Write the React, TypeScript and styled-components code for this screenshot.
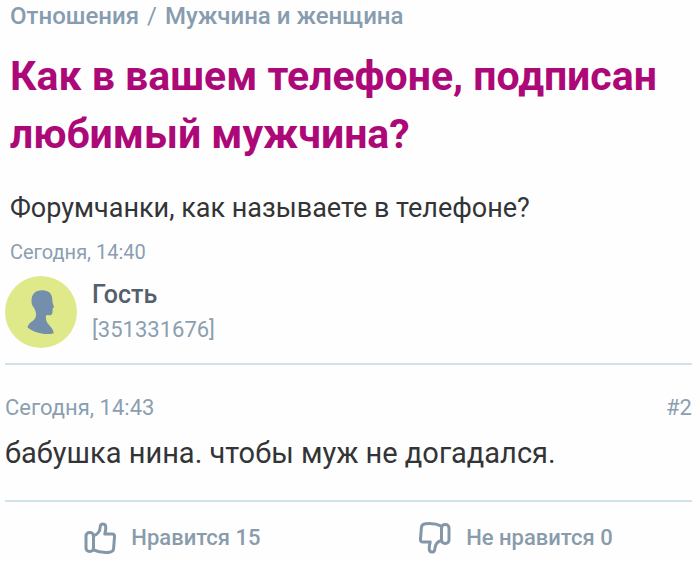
import React from 'react';
import styled, { createGlobalStyle } from 'styled-components';

const Global = createGlobalStyle`
  * { box-sizing: border-box; }
  body { margin: 0; background: #fefefe; color: #333436; font-family: Roboto, sans-serif; }
`;
const Page = styled.main`
  padding: 0 8px 0 5px;
`;
const Topic = styled.article`
  border-bottom: 2px solid #d3e1e9;
  padding-bottom: 15px;
`;
const TopicBody = styled.div`
  display: flex;
  flex-direction: column;
  padding: 4px 5px 12px;
`;
const Crumbs = styled.nav`
  display: flex;
  gap: 8px;
  font-size: 24px;
  line-height: 24px;
  font-weight: 500;
  color: #879cae;
`;
const Crumb = styled.a`
  color: inherit;
  text-decoration: none;
`;
const Slash = styled.span`
  font-weight: 400;
`;
const Title = styled.h1`
  margin: 19px 0 27px;
  font-size: 41px;
  line-height: 58px;
  font-weight: 700;
  color: #ad0878;
`;
const Text = styled.p<{ $size: number }>`
  margin: 0;
  font-size: ${p => p.$size}px;
  line-height: 36px;
`;
const Stamp = styled.time<{ $size: number }>`
  font-size: ${p => p.$size}px;
  line-height: 24px;
  color: #8b9fb1;
`;
const TopicStamp = styled(Stamp)`
  margin-top: 14px;
`;
const Author = styled.div`
  display: flex;
  gap: 15px;
`;
const Avatar = styled.svg`
  width: 72px;
  height: 72px;
  flex: none;
`;
const Name = styled.div`
  font-size: 25px;
  line-height: 38px;
  font-weight: 500;
  color: #53606b;
`;
const Id = styled.div`
  font-size: 22px;
  line-height: 32px;
  color: #8b9fb1;
`;
const Reply = styled.article`
  display: flex;
  flex-direction: column;
  gap: 15px;
  padding: 31px 0 29px;
`;
const Meta = styled.header`
  display: flex;
  justify-content: space-between;
`;
const Votes = styled.footer`
  display: flex;
  justify-content: space-around;
  padding: 20px 0 7px;
  border-top: 2px solid #d3e1e9;
`;
const Vote = styled.button`
  display: flex;
  gap: 15px;
  align-items: center;
  padding: 0;
  border: 0;
  background: none;
  font: 500 22px/24px Roboto, sans-serif;
  color: #8a9bab;
  cursor: pointer;
`;
const Icon = styled.svg`
  width: 32px;
  height: 32px;
  flex: none;
  fill: none;
  stroke: #8497a8;
  stroke-width: 3;
  stroke-linejoin: round;
  stroke-linecap: round;
`;

function Thumb({ down = false }: { down?: boolean }) {
  return (
    <Icon viewBox="0 0 32 32" aria-hidden="true">
      <g transform={down ? 'rotate(180 16 16)' : undefined}>
        <rect x="2" y="10.500" width="7.500" height="19" rx="3.500" />
        <path d="M9.500 13.500C13.500 12.500 16 9.500 16.200 5C16.200 .8 21.800 .8 21.800 5.500C21.800 8 21.500 9.500 20.800 12H28C30 12 30.700 13 30.500 15L29.600 26.500C29.400 29 28 30 25.500 30.200C19.500 30.800 14 30 9.500 27.800" />
      </g>
    </Icon>
  );
}

export default function App() {
  return (
    <>
      <Global />
      <Page>
        <Topic>
          <TopicBody>
            <Crumbs>
              <Crumb href="#relations">Отношения</Crumb>
              <Slash>/</Slash>
              <Crumb href="#man-woman">Мужчина и женщина</Crumb>
            </Crumbs>
            <Title>Как в вашем телефоне, подписан любимый мужчина?</Title>
            <Text $size={27}>Форумчанки, как называете в телефоне?</Text>
            <TopicStamp $size={20}>Сегодня, 14:40</TopicStamp>
          </TopicBody>
          <Author>
            <Avatar viewBox="0 0 72 72" aria-hidden="true">
              <circle cx="36" cy="36" r="36" fill="#dfe98a" />
              <path
                d="M26.500 25C26.500 18 30.500 14.300 37 14.300C44 14.300 47.300 18 47.300 24C47.300 27.500 48.800 29.500 49 31.200L47.500 32.500C47.800 36.500 47.500 39 45 39.200L41 39.200C40.500 43.500 41.500 46.500 44.500 49.500C47 52 48.500 54.500 48.700 57.200C40 59.500 30 57 22.500 51.500C23 48.500 25 47 28 44.800C32 41.500 32 37 29 32C27.300 29.500 26.500 28 26.500 25Z"
                fill="#738fab"
              />
            </Avatar>
            <div>
              <Name>Гость</Name>
              <Id>[351331676]</Id>
            </div>
          </Author>
        </Topic>
        <Reply>
          <Meta>
            <Stamp $size={22}>Сегодня, 14:43</Stamp>
            <Stamp as="span" $size={22}>#2</Stamp>
          </Meta>
          <Text $size={29}>бабушка нина. чтобы муж не догадался.</Text>
        </Reply>
        <Votes>
          <Vote type="button"><Thumb />Нравится 15</Vote>
          <Vote type="button"><Thumb down />Не нравится 0</Vote>
        </Votes>
      </Page>
    </>
  );
}
